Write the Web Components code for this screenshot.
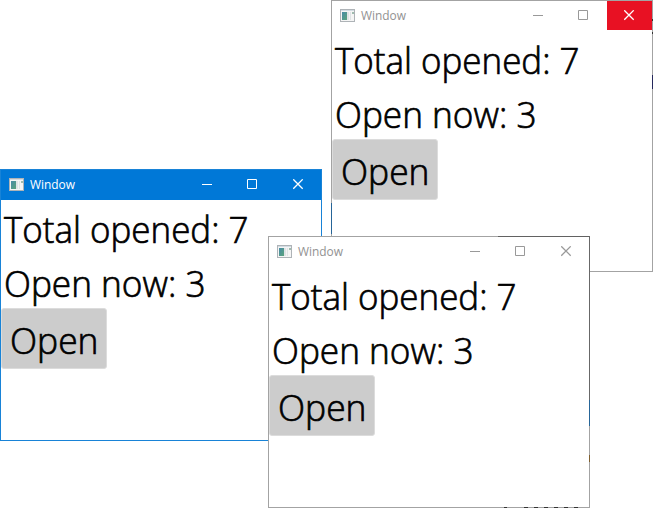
<!DOCTYPE html>
<html lang="en">
<head>
<meta charset="utf-8">
<title>Window</title>
<style>
html,body{margin:0;height:100%;overflow:hidden;background:#fff}
</style>
</head>
<body>
<desktop-area>
  <app-window style="left:331px;top:0" hot edge="b"></app-window>
  <app-window style="left:0;top:169px" active></app-window>
  <app-window style="left:268px;top:236px" edge="c"></app-window>
</desktop-area>
<script>
const mount = (el, html) => { el.attachShadow({mode:'open'}).innerHTML = html; };

class DesktopArea extends HTMLElement {
  connectedCallback() {
    mount(this, `<style>:host{display:block;position:relative;width:653px;height:508px;overflow:hidden;background:#fff}
    ::slotted(app-window){position:absolute}</style><slot></slot>`);
  }
}

/* A line of text set to an exact advance width. */
class FitText extends HTMLElement {
  connectedCallback() {
    const g = n => this.getAttribute(n);
    mount(this, `<style>:host{display:block}svg{display:block;overflow:visible}
    text{font-family:"Open Sans","Noto Sans",sans-serif;font-size:${g('size')}px;fill:currentColor}
    :host([light]) text{font-weight:300;stroke:currentColor;stroke-width:.7px}</style>
    <svg width="${g('width')}" height="${g('height')}"><text x="0" y="${g('baseline')}" textLength="${g('width')}" lengthAdjust="spacingAndGlyphs">${g('text')}</text></svg>`);
  }
}

class OpenButton extends HTMLElement {
  connectedCallback() {
    mount(this, `<style>:host{display:block;box-sizing:border-box;width:106px;height:61px;padding:0 0 0 8px;background:#ccc;border:1px solid #dcdcdc;border-radius:3px}</style><slot></slot>`);
  }
}

class TitleBar extends HTMLElement {
  connectedCallback() {
    mount(this, `<style>
    :host{display:flex;height:30px;padding-left:8px;color:var(--title)}
    .icon{margin:8px 6px 0 0;flex:none}
    fit-text{flex:1}
    .buttons{display:flex;gap:1px}
    .b{width:45px;height:29px;display:grid;place-items:center}
    .b svg{display:block;stroke:var(--glyph);fill:none}
    .close{background:var(--close)}
    .close svg{stroke:var(--closeglyph);stroke-width:1.25}
    </style>
    <svg class="icon" width="15" height="13">
      <defs><linearGradient id="g" x2="1" y2="1"><stop stop-color="#478ba6"/><stop offset="1" stop-color="#5ba37c"/></linearGradient></defs>
      <rect x=".5" y=".5" width="14" height="12" fill="#f5f5f5" stroke="#aeb3b7"/>
      <rect x="1" y="1" width="13" height="1" fill="#d3dce3"/>
      <rect x="2" y="3" width="5" height="8" fill="url(#g)"/>
      <rect x="7" y="3" width="4" height="8" fill="#dfe3e5"/>
      <rect x="9" y="3" width="1" height="8" fill="#f3f3f3"/>
      <rect x="12" y="3" width="2" height="2" fill="#9fbbaf"/>
    </svg>
    <fit-text text="Window" size="12" width="45" height="29" baseline="19"></fit-text>
    <div class="buttons">
      <div class="b"><svg width="11" height="11"><path d="M1 5.5h10"/></svg></div>
      <div class="b"><svg width="11" height="11"><path d="M.5 .5h9v9h-9z"/></svg></div>
      <div class="b close"><svg width="11" height="11"><path d="M.3 .3l9.4 9.4M9.7 .3l-9.4 9.4"/></svg></div>
    </div>`);
  }
}

class AppWindow extends HTMLElement {
  connectedCallback() {
    mount(this, `<style>
    :host{--title:#929292;--glyph:#999;--close:transparent;--closeglyph:#999;display:block;box-sizing:border-box;width:322px;height:272px;border:1px solid #a3a3a3;background:#fff;color:#000}
    :host([active]){--title:#fff;--glyph:#fff;--closeglyph:#fff;border-color:#1883d7}
    :host([active]) title-bar{background:#0078d7}
    :host([hot]){--close:#e81123;--closeglyph:#fff}
    main{display:grid;justify-items:start;grid-template-rows:54px 54px 61px;padding-left:3px}
    open-button{margin:0 0 0 -3px}
    i{position:absolute;display:block}
    </style>
    <title-bar></title-bar>
    <main>
      <fit-text light text="Total opened: 7" size="36" width="244.5" height="54" baseline="42.5"></fit-text>
      <fit-text light text="Open now: 3" size="36" width="201.5" height="54" baseline="42.5"></fit-text>
      <open-button><fit-text light text="Open" size="36" width="88.5" height="58" baseline="44.8"></fit-text></open-button>
    </main>
    ${this.getAttribute('edge') === 'b' ? `
      <i style="left:-1px;top:202px;width:1px;height:31px;background:#266598"></i>
      <i style="left:320px;top:18px;width:1px;height:2px;background:#333"></i>
      <i style="left:320px;top:31px;width:1px;height:2px;background:#333"></i>
      <i style="left:320px;top:74px;width:1px;height:14px;background:#25285c"></i>` : ''}
    ${this.getAttribute('edge') === 'c' ? `
      <i style="left:229px;top:-1px;width:92px;height:1px;background:#626262"></i>
      <i style="left:320px;top:-1px;width:1px;height:164px;background:#686868"></i>
      <i style="left:320px;top:163px;width:1px;height:26px;background:#266598"></i>
      <i style="left:320px;top:218px;width:1px;height:7px;background:#80602f"></i>
      <i style="left:235px;top:270px;width:3px;height:1px;background:#333"></i>
      <i style="left:255px;top:270px;width:60px;height:1px;background:repeating-linear-gradient(90deg,#333 0 4px,#a3a3a3 4px 10px)"></i>` : ''}`);
  }
}
customElements.define('fit-text', FitText);
customElements.define('open-button', OpenButton);
customElements.define('title-bar', TitleBar);
customElements.define('app-window', AppWindow);
customElements.define('desktop-area', DesktopArea);
</script>
</body>
</html>
